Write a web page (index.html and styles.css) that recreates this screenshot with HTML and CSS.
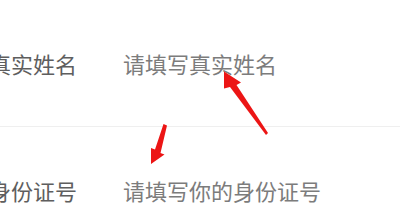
FILE: index.html
```html
<!DOCTYPE html>
<html lang="zh">
<head>
<meta charset="utf-8">
<link rel="stylesheet" href="styles.css">
</head>
<body>
<div class="form">
  <div class="row">
    <span class="label">真实姓名</span>
    <span class="placeholder">请填写真实姓名</span>
  </div>
  <div class="row last">
    <span class="label">身份证号</span>
    <span class="placeholder">请填写你的身份证号</span>
  </div>
</div>
<svg class="arrows" width="400" height="220" viewBox="0 0 400 220">
  <polygon points="224,71.5 241,82.5 236.5,85 268,133 266,135 230,87 224,88.5" />
  <polygon points="151,164 151,148 155,149.5 163.5,124 167,125.5 160.5,153 164.5,154.5" />
</svg>
</body>
</html>
```

FILE: styles.css
```css
html, body {
  margin: 0;
  padding: 0;
  background: #ffffff;
  width: 400px;
  height: 220px;
  overflow: hidden;
  position: relative;
}
.form {
  margin-left: -11px;
  font-family: "Noto Sans CJK SC", "Noto Sans", sans-serif;
  font-size: 22px;
}
.row {
  display: flex;
  align-items: center;
  height: 126px;
  border-bottom: 1px solid #efefef;
}
.row.last {
  height: 93px;
  align-items: flex-end;
  padding-bottom: 0;
  border-bottom: none;
}
.row.last .label,
.row.last .placeholder {
  line-height: 32px;
  margin-bottom: 14px;
}
.label {
  width: 134px;
  flex: none;
  color: #5e5e5e;
}
.placeholder {
  color: #7c7c7c;
}
.arrows {
  position: absolute;
  left: 0;
  top: 0;
}
.arrows polygon {
  fill: #ec1515;
}
```
